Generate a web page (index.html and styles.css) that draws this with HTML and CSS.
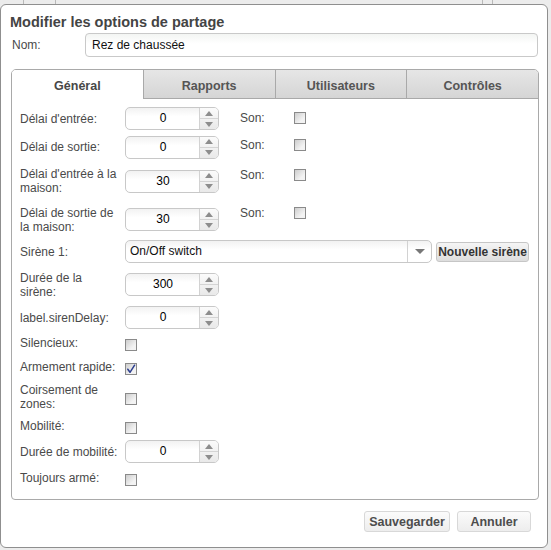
FILE: index.html
```html
<!DOCTYPE html>
<html lang="fr">
<head>
<meta charset="utf-8">
<title>Modifier les options de partage</title>
<link rel="stylesheet" href="styles.css">
</head>
<body>
<div class="strip"><span class="s1"></span><span class="s2"></span><span class="s3"></span><span class="s4"></span></div>
<div class="dialog">
  <div class="title">Modifier les options de partage</div>
  <div class="name-row">
    <span class="name-label">Nom:</span>
    <div class="text-input">Rez de chaussée</div>
  </div>
  <div class="tabpanel">
    <div class="tabs">
      <div class="tab active">Général</div>
      <div class="tab">Rapports</div>
      <div class="tab">Utilisateurs</div>
      <div class="tab">Contrôles</div>
    </div>
    <div class="form">
      <span class="lbl">Délai d'entrée:</span>
      <div class="spinner"><span class="spin-value">0</span><span class="spin-trigger"><span class="half"><i class="arr up"></i></span><span class="half"><i class="arr down"></i></span></span></div>
      <span class="son">Son:</span>
      <span class="cb side"></span>

      <span class="lbl">Délai de sortie:</span>
      <div class="spinner"><span class="spin-value">0</span><span class="spin-trigger"><span class="half"><i class="arr up"></i></span><span class="half"><i class="arr down"></i></span></span></div>
      <span class="son">Son:</span>
      <span class="cb side"></span>

      <span class="lbl">Délai d'entrée à la maison:</span>
      <div class="spinner"><span class="spin-value">30</span><span class="spin-trigger"><span class="half"><i class="arr up"></i></span><span class="half"><i class="arr down"></i></span></span></div>
      <span class="son">Son:</span>
      <span class="cb side"></span>

      <span class="lbl">Délai de sortie de la maison:</span>
      <div class="spinner"><span class="spin-value">30</span><span class="spin-trigger"><span class="half"><i class="arr up"></i></span><span class="half"><i class="arr down"></i></span></span></div>
      <span class="son">Son:</span>
      <span class="cb side"></span>

      <span class="lbl">Sirène 1:</span>
      <div class="select-row">
        <div class="select"><span class="select-value">On/Off switch</span><span class="select-trigger"><i class="arr down dark"></i></span></div>
        <button class="small-btn" type="button">Nouvelle sirène</button>
      </div>

      <span class="lbl">Durée de la sirène:</span>
      <div class="spinner"><span class="spin-value">300</span><span class="spin-trigger"><span class="half"><i class="arr up"></i></span><span class="half"><i class="arr down"></i></span></span></div>

      <span class="lbl">label.sirenDelay:</span>
      <div class="spinner"><span class="spin-value">0</span><span class="spin-trigger"><span class="half"><i class="arr up"></i></span><span class="half"><i class="arr down"></i></span></span></div>

      <span class="lbl">Silencieux:</span>
      <span class="cb"></span>

      <span class="lbl">Armement rapide:</span>
      <span class="cb checked"><svg width="10" height="10" viewBox="0 0 10 10"><path d="M1.8 5.2 L4 8.3 L8.6 1.2" fill="none" stroke="#2d3f8f" stroke-width="1.5" stroke-linecap="round" stroke-linejoin="round"/></svg></span>

      <span class="lbl">Coirsement de zones:</span>
      <span class="cb"></span>

      <span class="lbl">Mobilité:</span>
      <span class="cb"></span>

      <span class="lbl">Durée de mobilité:</span>
      <div class="spinner"><span class="spin-value">0</span><span class="spin-trigger"><span class="half"><i class="arr up"></i></span><span class="half"><i class="arr down"></i></span></span></div>

      <span class="lbl">Toujours armé:</span>
      <span class="cb"></span>
    </div>
  </div>
  <div class="actions">
    <button class="btn save" type="button">Sauvegarder</button>
    <button class="btn cancel" type="button">Annuler</button>
  </div>
</div>
</body>
</html>
```
FILE: styles.css
```css
* { box-sizing: border-box; }

body {
  margin: 0;
  width: 551px;
  height: 550px;
  overflow: hidden;
  background: #ececec;
  font-family: "Liberation Sans", Arial, sans-serif;
}

.strip {
  height: 4px;
  display: flex;
}
.strip span { border-right: 1px solid #b9b9b9; height: 4px; }
.strip .s1 { width: 24px; }
.strip .s2 { width: 32px; }
.strip .s3 { width: 427px; }
.strip .s4 { width: 10px; }

.dialog {
  width: 548px;
  height: 544px;
  background: #fff;
  border: 1px solid #8f8f8f;
  border-radius: 6px;
  display: flex;
  flex-direction: column;
}

.title {
  margin: 8px 0 0 9px;
  font-size: 14.5px;
  font-weight: bold;
  color: #444;
  line-height: 18px;
}

.name-row {
  display: flex;
  align-items: center;
  margin-top: 2px;
  height: 24px;
}
.name-label {
  width: 84px;
  padding-left: 11px;
  font-size: 12px;
  color: #4a4a4a;
}
.text-input {
  width: 453px;
  height: 24px;
  border: 1px solid #c9c9c9;
  border-radius: 4px;
  padding-left: 6px;
  font-size: 12px;
  line-height: 22px;
  color: #111;
  background: linear-gradient(#f3f5f3, #fff 45%);
}

.tabpanel {
  margin: 12px 0 0 10px;
  width: 528px;
  height: 431px;
  border: 1px solid #a9a9a9;
  border-radius: 5px 5px 4px 4px;
  overflow: hidden;
}
.tabs {
  display: flex;
  height: 29px;
}
.tab {
  flex: 1;
  display: flex;
  align-items: center;
  justify-content: center;
  padding-top: 4px;
  font-size: 12.5px;
  font-weight: bold;
  color: #555;
  background: linear-gradient(#e6e6e6, #d5d5d5);
  border-left: 1px solid #a9a9a9;
  border-bottom: 1px solid #a9a9a9;
}
.tab:first-child { border-left: none; }
.tab.active {
  background: #fff;
  border-bottom-color: transparent;
  color: #474747;
}

.form {
  display: grid;
  grid-template-columns: 105px 115px 54px 1fr;
  grid-template-rows: 27px 30px 38px 39px 25px 41px 25px 26px 22px 37px 21px 31px 22px;
  padding: 6px 0 0 8px;
  font-size: 12px;
  color: #4a4a4a;
}
.lbl {
  grid-column: 1;
  align-self: center;
  width: 100px;
  line-height: 14px;
}
.son {
  grid-column: 3;
  align-self: start;
  margin-top: 6px;
  line-height: 14px;
}

.spinner {
  grid-column: 2;
  align-self: center;
  width: 94px;
  height: 23px;
  display: flex;
  border: 1px solid #c8c8c8;
  border-radius: 5px;
  overflow: hidden;
  background: linear-gradient(#f2f2f2, #fff 40%);
}
.spin-value {
  flex: 1;
  text-align: center;
  line-height: 21px;
  color: #000;
  font-size: 12px;
  padding-left: 1px;
}
.spin-trigger {
  width: 19px;
  border-left: 1px solid #d2d2d2;
  display: flex;
  flex-direction: column;
  background: linear-gradient(#fbfbfb, #e9e9e9);
}
.half {
  flex: 1;
  display: flex;
  align-items: center;
  justify-content: center;
}
.half:first-child { border-bottom: 1px solid #d4d4d4; }

.arr {
  display: block;
  width: 0;
  height: 0;
  border-left: 4.5px solid transparent;
  border-right: 4.5px solid transparent;
}
.arr.up { border-bottom: 5px solid #8d8d8d; }
.arr.down { border-top: 5px solid #8d8d8d; }
.arr.down.dark { border-top-color: #777; border-left-width: 5px; border-right-width: 5px; }

.cb {
  grid-column: 2;
  align-self: center;
  margin-top: 4px;
  width: 12px;
  height: 12px;
  border: 1px solid #8a8a8a;
  background: linear-gradient(135deg, #cdcdcd, #f3f3f3 70%);
  display: flex;
  align-items: center;
  justify-content: center;
}
.cb.side {
  grid-column: 4;
  align-self: start;
  margin-top: 7px;
}
.cb svg { display: block; }

.select-row {
  grid-column: 2 / 5;
  align-self: center;
  display: flex;
  align-items: center;
  gap: 4px;
}
.select {
  width: 307px;
  height: 23px;
  display: flex;
  border: 1px solid #c8c8c8;
  border-radius: 5px;
  background: linear-gradient(#f2f2f2, #fff 40%);
}
.select-value {
  flex: 1;
  padding-left: 4px;
  line-height: 21px;
  color: #111;
  font-size: 12px;
}
.select-trigger {
  width: 24px;
  border-left: 1px solid #d2d2d2;
  display: flex;
  align-items: center;
  justify-content: center;
}

.small-btn {
  width: 93px;
  height: 20px;
  padding: 0;
  font-family: "Liberation Sans", Arial, sans-serif;
  font-size: 12px;
  font-weight: bold;
  color: #333;
  border: 1px solid #c6c6c6;
  border-radius: 3px;
  background: linear-gradient(#f5f5f5, #dddddd);
}

.actions {
  display: flex;
  justify-content: flex-end;
  gap: 7px;
  margin-top: 11px;
  padding-right: 16px;
}
.btn {
  height: 21px;
  padding: 0;
  font-family: "Liberation Sans", Arial, sans-serif;
  font-size: 12.5px;
  font-weight: bold;
  color: #4d4d4d;
  border: 1px solid #d8d8d8;
  border-radius: 3px;
  background: linear-gradient(#fbfbfb, #ededed);
}
.btn.save { width: 86px; }
.btn.cancel { width: 74px; }
```
